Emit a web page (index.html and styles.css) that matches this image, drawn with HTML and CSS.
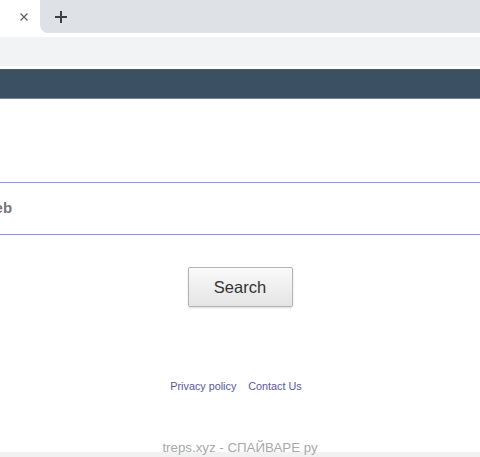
FILE: index.html
```html
<!DOCTYPE html>
<html>
<head>
<meta charset="utf-8">
<link rel="stylesheet" href="styles.css">
</head>
<body>
<div class="tabstrip">
  <div class="tab">
    <svg class="tab-close" width="10" height="10" viewBox="0 0 10 10"><path d="M1.5 1.5 L8.5 8.5 M8.5 1.5 L1.5 8.5" stroke="#5f6368" stroke-width="1.3" fill="none"/></svg>
  </div>
  <div class="tab-rest">
    <svg class="newtab" width="14" height="14" viewBox="0 0 14 14"><path d="M7 1 V13 M1 7 H13" stroke="#3c4043" stroke-width="2" fill="none"/></svg>
  </div>
</div>
<div class="gap4"></div>
<div class="toolbar"></div>
<div class="gap3"></div>
<div class="navbar"></div>
<main class="content">
  <div class="search-row">
    <div class="search-box"><span class="placeholder">Search the web</span></div>
  </div>
  <button class="search-btn">Search</button>
  <nav class="links">
    <a href="#">Privacy policy</a>
    <a href="#">Contact Us</a>
  </nav>
</main>
<div class="footer-bar"></div>
<div class="watermark">treps.xyz - СПАЙВАРЕ ру</div>
</body>
</html>
```
FILE: styles.css
```css
html, body {
  margin: 0;
  padding: 0;
  height: 457px;
  overflow: hidden;
  background: #ffffff;
  font-family: "Liberation Sans", Arial, sans-serif;
}
body { position: relative; }
.tabstrip {
  display: flex;
  height: 33px;
  background: #ffffff;
}
.tab {
  width: 40px;
  background: #ffffff;
  display: flex;
  align-items: center;
  justify-content: flex-end;
  padding-right: 11px;
  box-sizing: border-box;
}
.tab-close { display: block; }
.tab-rest {
  flex: 1;
  background: #dee1e6;
  border-bottom-left-radius: 8px;
  display: flex;
  align-items: center;
  padding-left: 14px;
}
.newtab { display: block; }
.gap4 { height: 4px; }
.toolbar { height: 29px; background: #f1f3f4; }
.gap3 { height: 3px; }
.navbar {
  height: 28px;
  background: #3c5064;
  border-top: 1px solid #4f5b67;
  border-bottom: 1px solid #7b8692;
}
.content {
  display: flex;
  flex-direction: column;
  align-items: center;
  padding-top: 83px;
}
.search-row {
  width: 100%;
  display: flex;
  justify-content: center;
}
.search-box {
  flex: none;
  width: 690px;
  height: 51px;
  border: 1px solid #8f95e0;
  box-sizing: content-box;
  display: flex;
  align-items: center;
  padding-left: 14px;
}
.placeholder {
  font-size: 15px;
  font-weight: bold;
  color: #777777;
  margin-top: -2px;
}
.search-btn {
  margin-top: 32px;
  width: 105px;
  height: 40px;
  border: 1px solid #b4b4b4;
  border-radius: 2px;
  background: linear-gradient(#fafafa, #e4e4e4);
  box-shadow: 0 1px 2px rgba(0,0,0,0.15);
  font-family: "Liberation Sans", Arial, sans-serif;
  font-size: 16.5px;
  color: #333333;
  padding: 0;
}
.links {
  margin-top: 72px;
  margin-right: 8px;
  display: flex;
  gap: 12px;
  font-size: 10.8px;
  line-height: 14px;
}
.links a {
  color: #55579f;
  text-decoration: none;
}
.footer-bar {
  position: absolute;
  left: 0;
  right: 0;
  top: 452px;
  height: 5px;
  background: #f1f1f1;
}
.watermark {
  position: absolute;
  left: 0;
  right: 0;
  top: 440px;
  text-align: center;
  font-size: 13.3px;
  line-height: 16px;
  color: #a9a9a9;
}
```
